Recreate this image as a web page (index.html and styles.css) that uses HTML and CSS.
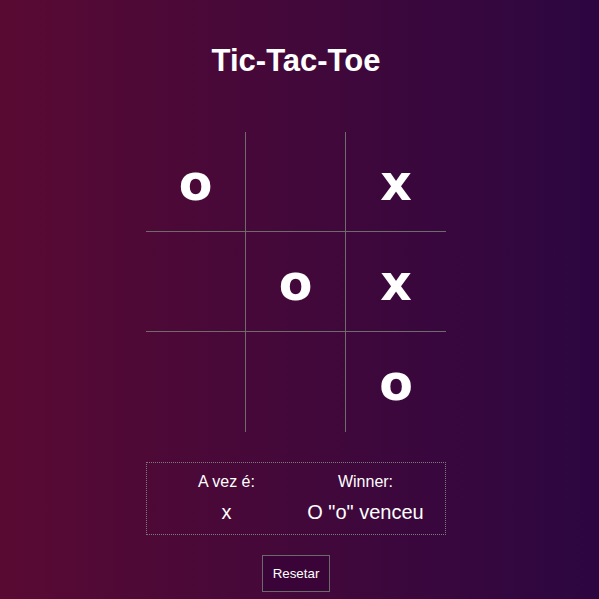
FILE: index.html
```html
<!DOCTYPE html>
<html lang="pt">
<head>
<meta charset="utf-8">
<title>Tic-Tac-Toe</title>
<link rel="stylesheet" href="styles.css">
</head>
<body>
<main class="app">
  <h1 class="title">Tic-Tac-Toe</h1>
  <div class="board">
    <div class="cell">o</div>
    <div class="cell"></div>
    <div class="cell">x</div>
    <div class="cell"></div>
    <div class="cell">o</div>
    <div class="cell">x</div>
    <div class="cell"></div>
    <div class="cell"></div>
    <div class="cell">o</div>
  </div>
  <div class="info">
    <div class="info-col">
      <span class="label">A vez é:</span>
      <span class="value">x</span>
    </div>
    <div class="info-col">
      <span class="label">Winner:</span>
      <span class="value">O "o" venceu</span>
    </div>
  </div>
  <button class="reset" type="button">Resetar</button>
</main>
</body>
</html>
```
FILE: styles.css
```css
html, body {
  margin: 0;
  padding: 0;
  height: 100%;
}

body {
  background: linear-gradient(to right, #590a33, #2c0641);
  color: #ffffff;
  font-family: "Liberation Sans", Arial, sans-serif;
}

.app {
  display: flex;
  flex-direction: column;
  align-items: center;
  padding: 43px 7px 0 0;
}

.title {
  margin: 0 0 53px;
  font-size: 31px;
  font-weight: bold;
  line-height: normal;
}

.board {
  display: grid;
  grid-template-columns: repeat(3, 100px);
  grid-template-rows: repeat(3, 100px);
}

.cell {
  box-sizing: border-box;
  display: flex;
  align-items: center;
  justify-content: center;
  padding-top: 3px;
  border-right: 1px solid #6c6c6c;
  border-bottom: 1px solid #6c6c6c;
  font-family: "DejaVu Sans", Verdana, sans-serif;
  font-weight: bold;
  font-size: 49px;
}

.cell:nth-child(3n) {
  border-right: none;
}

.cell:nth-child(n+7) {
  border-bottom: none;
}

.info {
  box-sizing: border-box;
  width: 300px;
  margin-top: 30px;
  padding: 10px;
  border: 1px dotted #7a7a7a;
  display: grid;
  grid-template-columns: 1fr 1fr;
}

.info-col {
  display: flex;
  flex-direction: column;
  align-items: center;
  gap: 10px;
}

.label {
  font-size: 16px;
}

.value {
  font-size: 20px;
}

.reset {
  margin-top: 20px;
  padding: 10px;
  font-family: "Liberation Sans", Arial, sans-serif;
  font-size: 13.33px;
  color: #ffffff;
  background: #3a0438;
  border: 1px solid #6a6a6a;
  border-radius: 0;
}
```
